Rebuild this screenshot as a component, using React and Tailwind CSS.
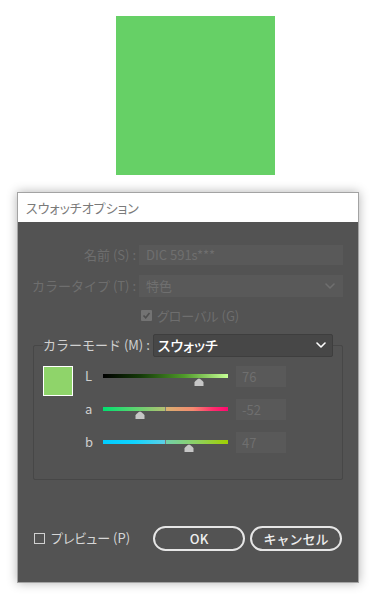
const Thumb = ({ left }) => (
  <svg
    className="absolute top-[12px]"
    style={{ left: left - 5 }}
    width="10"
    height="8"
    viewBox="0 0 10 8"
  >
    <path d="M5 0.5 C6 0.5 9.5 3.5 9.5 4.5 V8 H0.5 V4.5 C0.5 3.5 4 0.5 5 0.5 Z" fill="#c6c6c6" />
  </svg>
);

const SliderRow = ({ label, gradient, split, thumb, value }) => (
  <div className="flex items-start h-[21px]">
    <div className="w-[18px] pt-[2px] text-[13px] leading-[16px] text-[#cfcfcf]">{label}</div>
    <div className="relative w-[125px] h-[21px]">
      <div className="absolute left-0 right-0 top-[8px] h-[4px]" style={{ background: gradient }} />
      {split && <div className="absolute left-[62px] top-[8px] w-[1px] h-[4px] bg-[#7c7c7c]" />}
      <Thumb left={thumb} />
    </div>
    <div className="ml-[8px] w-[50px] h-[21px] bg-[#595959] pl-[6px] text-[13px] leading-[21px] text-[#6f6f6f]">
      {value}
    </div>
  </div>
);

const Chevron = ({ color }) => (
  <svg width="10" height="6" viewBox="0 0 10 6" fill="none">
    <path d="M1 1 L5 5 L9 1" stroke={color} strokeWidth="1.6" strokeLinecap="round" strokeLinejoin="round" />
  </svg>
);

export default function App() {
  return (
    <div className="w-[385px] h-[602px] bg-white font-['Noto_Sans_CJK_JP','Noto_Sans',sans-serif] overflow-hidden">
      <div className="pt-[16px] pl-[116px]">
        <div className="w-[159px] h-[159px] bg-[#66d066]" />
      </div>

      <div className="mt-[17px] ml-[17px] w-[342px] h-[391px] border border-[#a3a3a3] shadow-[0_0_10px_rgba(0,0,0,0.3)] flex flex-col">
        <div className="h-[29px] bg-white pl-[8px] text-[13px] leading-[29px] text-[#7a7a7a] [font-feature-settings:'palt']">
          スウォッチオプション
        </div>

        <div className="flex-1 bg-[#535353] flex flex-col">
          {/* name */}
          <div className="mt-[23px] flex items-center">
            <div className="w-[118px] text-right text-[13px] text-[#6e6e6e]">名前 (S) :</div>
            <div className="ml-[3px] w-[204px] h-[20px] bg-[#595959] pl-[7px] text-[13px] leading-[20px] text-[#6f6f6f]">
              DIC 591s***
            </div>
          </div>

          {/* color type */}
          <div className="mt-[10px] flex items-center">
            <div className="w-[118px] text-right text-[13px] text-[#6e6e6e] whitespace-nowrap">カラータイプ (T) :</div>
            <div className="ml-[3px] w-[204px] h-[22px] bg-[#595959] pl-[7px] pr-[8px] flex items-center justify-between text-[13px] text-[#6f6f6f]">
              <span>特色</span>
              <Chevron color="#6f6f6f" />
            </div>
          </div>

          {/* global */}
          <div className="mt-[9px] ml-[123px] flex items-center">
            <div className="w-[11px] h-[11px] bg-[#737373] rounded-[1px] flex items-center justify-center">
              <svg width="9" height="9" viewBox="0 0 9 9" fill="none">
                <path d="M1.5 4.5 L3.7 6.8 L7.5 2" stroke="#4f4f4f" strokeWidth="1.6" />
              </svg>
            </div>
            <span className="ml-[5px] text-[13px] text-[#6e6e6e] [font-feature-settings:'palt']">グローバル (G)</span>
          </div>

          {/* color mode group */}
          <fieldset className="mt-[8px] ml-[15px] w-[310px] border border-[#474747] rounded-[2px] pb-[26px]">
            <legend className="ml-[9px] flex items-center">
              <span className="text-[13px] text-[#d0d0d0] whitespace-nowrap">カラーモード (M) :</span>
              <div className="ml-[3px] w-[180px] h-[23px] bg-[#474747] border border-[#3e3e3e] rounded-[2px] pl-[4px] pr-[6px] flex items-center justify-between">
                <span className="text-[14px] font-medium text-white [font-feature-settings:'palt']">スウォッチ</span>
                <Chevron color="#ffffff" />
              </div>
            </legend>

            <div className="mt-[9px] ml-[9px] flex items-start">
              <div className="w-[30px] h-[30px] bg-[#8fd46a] border border-white" />
              <div className="ml-[12px] flex flex-col gap-[12px]">
                <SliderRow
                  label="L"
                  gradient="linear-gradient(to right,#000 0%,#143a08 30%,#4f9a2a 65%,#c6ff96 100%)"
                  thumb={96}
                  value="76"
                />
                <SliderRow
                  label="a"
                  split
                  gradient="linear-gradient(to right,#00e070 0%,#5ad470 25%,#b4c072 49.5%,#d8b070 50.5%,#f58a70 72%,#ff2d6c 88%,#ff0870 100%)"
                  thumb={37}
                  value="-52"
                />
                <SliderRow
                  label="b"
                  split
                  gradient="linear-gradient(to right,#00ccff 0%,#10d4ff 25%,#5ccfe6 49.5%,#72d0aa 50.5%,#8ed062 75%,#a0cf00 100%)"
                  thumb={86}
                  value="47"
                />
              </div>
            </div>
          </fieldset>

          {/* footer */}
          <div className="mt-[46px] flex items-center">
            <div className="ml-[16px] w-[11px] h-[11px] border border-[#d0d0d0]" />
            <span className="ml-[6px] text-[13px] text-[#d6d6d6] [font-feature-settings:'palt']">プレビュー (P)</span>
            <button className="ml-[23px] w-[92px] h-[25px] rounded-full border-2 border-[#e6e6e6] text-[13px] font-medium text-[#eeeeee] leading-none">
              OK
            </button>
            <button className="ml-[5px] w-[92px] h-[25px] rounded-full border-2 border-[#e6e6e6] text-[13px] font-medium text-[#eeeeee] leading-none">
              キャンセル
            </button>
          </div>
        </div>
      </div>
    </div>
  );
}
